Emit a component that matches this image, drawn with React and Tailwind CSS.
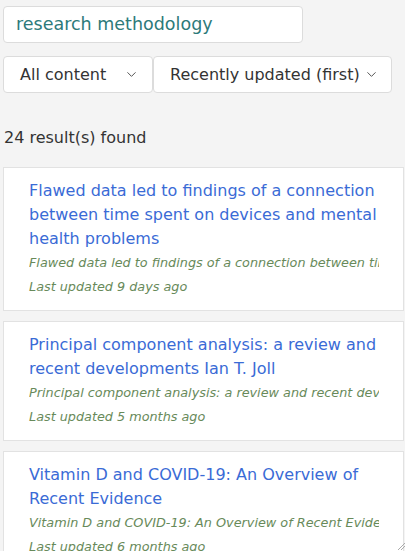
import { ChevronDown } from 'lucide-react';

const results = [
    {
        id: 1,
        title: 'Flawed data led to findings of a connection between time spent on devices and mental health problems',
        summary: 'Flawed data led to findings of a connection between time spent on devices and mental health problems',
        updated: 'Last updated 9 days ago',
    },
    {
        id: 2,
        title: 'Principal component analysis: a review and recent developments Ian T. Joll',
        summary: 'Principal component analysis: a review and recent developments Ian T. Jolliffe',
        updated: 'Last updated 5 months ago',
    },
    {
        id: 3,
        title: 'Vitamin D and COVID-19: An Overview of Recent Evidence',
        summary: 'Vitamin D and COVID-19: An Overview of Recent Evidence',
        updated: 'Last updated 6 months ago',
    },
];

const Select = ({ label, className }) => (
    <div className={`flex items-center justify-between h-[37px] bg-white border border-[#dcdcdc] rounded-[4px] ${className}`}>
        <span className="text-[16px] text-[#333]">{label}</span>
        <ChevronDown size={15} strokeWidth={1.6} className="text-[#555]" />
    </div>
);

const App = () => {
    return (
        <div className="relative h-[551px] overflow-hidden bg-[#f4f4f4] font-['DejaVu_Sans',sans-serif]">
            <div className="pt-[6px] pl-[3px]">
                <div className="w-[300px] h-[37px] bg-white border border-[#dcdcdc] rounded-[4px] flex items-center pl-[12px]">
                    <span className="text-[17.5px] text-[#2d7a7a] leading-none">research methodology</span>
                </div>
            </div>

            <div className="flex mt-[13px] pl-[3px]">
                <Select label="All content" className="w-[150px] pl-[16px] pr-[13px]" />
                <Select label="Recently updated (first)" className="w-[239px] pl-[16px] pr-[12px]" />
            </div>

            <p className="mt-[33px] pl-[4px] text-[16px] text-[#333] leading-[24px]">24 result(s) found</p>

            <div className="mt-[17px] ml-[3px] w-[401px] flex flex-col gap-[10px]">
                {results.map(r => (
                    <div key={r.id} className="bg-white border border-[#e2e2e2] py-[11px] pl-[25px] pr-[24px]">
                        <h3 className="text-[16px] leading-[24px] text-[#3a6bd6]">{r.title}</h3>
                        <p className="text-[12.8px] leading-[24px] italic text-[#688a5a] whitespace-nowrap overflow-hidden">{r.summary}</p>
                        <p className="text-[12.8px] leading-[24px] italic text-[#688a5a]">{r.updated}</p>
                    </div>
                ))}
            </div>

            <svg width="8" height="8" viewBox="0 0 8 8" className="absolute right-[0px] bottom-[1px]">
                <line x1="8" y1="1" x2="1" y2="8" stroke="#aaa" strokeWidth="1" />
                <line x1="8" y1="4" x2="4" y2="8" stroke="#aaa" strokeWidth="1" />
            </svg>
        </div>
    );
};

export default App;
